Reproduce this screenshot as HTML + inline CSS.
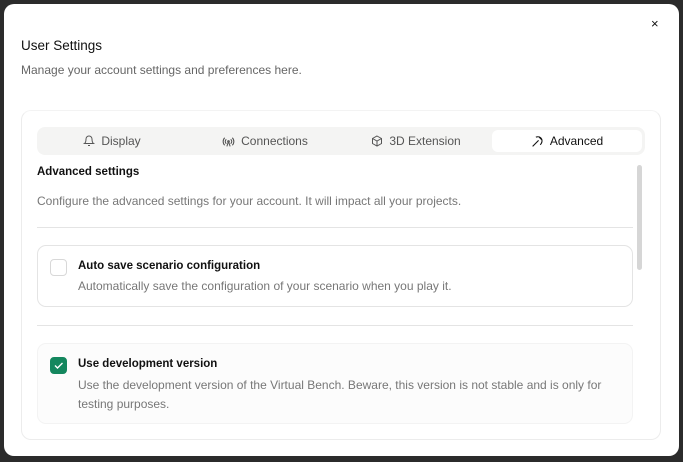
<!DOCTYPE html><html><head><style>
body{margin:0;width:683px;height:462px;background:#2b2b2b;font-family:"Liberation Sans",sans-serif;overflow:hidden;position:relative}
.dlg{position:absolute;left:4px;top:4px;width:675px;height:452px;background:#fff;border-radius:10px}
.a{position:absolute;white-space:nowrap}
.card{position:absolute;left:21px;top:110px;width:638px;height:328px;border:1px solid #ececec;border-radius:10px;border-top-color:#f3f3f3}
.tabs{position:absolute;left:37px;top:127px;width:608px;height:28px;background:#f4f4f3;border-radius:8px}
.tab{position:absolute;top:0;height:28px;line-height:28px;font-size:12px;color:#555;display:flex;align-items:center;justify-content:center;gap:6px}
.act{position:absolute;left:492px;top:130px;width:150px;height:22px;background:#fff;border-radius:6px}
.hr{position:absolute;left:37px;width:596px;height:1px;background:#e4e4e4}
.box{position:absolute;left:37px;width:594px;border:1px solid #e4e4e4;border-radius:9px}
.cb{position:absolute;left:50px;width:15px;height:15px;border:1px solid #d8d8d8;border-radius:4px}
.t{font-size:11.5px;color:#111;font-weight:bold}
.d{font-size:12px;color:#777}
</style></head><body>
<div class="dlg"></div>
<div class="a" style="left:651px;top:16px;font-size:13px;color:#111">×</div>
<div class="a" style="left:21px;top:38px;font-size:13.5px;color:#111">User Settings</div>
<div class="a" style="left:21px;top:63px;font-size:12px;color:#666">Manage your account settings and preferences here.</div>
<div class="card"></div>
<div class="tabs"></div>
<div class="act"></div>
<div class="tab" style="left:37px;width:150px;top:127px"><svg width="12" height="12" viewBox="0 0 24 24" fill="none" stroke="#555" stroke-width="2"><path d="M6 8a6 6 0 0 1 12 0c0 7 3 9 3 9H3s3-2 3-9M10 21h4"/></svg>Display</div>
<div class="tab" style="left:190px;width:150px;top:127px"><svg width="13" height="13" viewBox="0 0 24 24" fill="none" stroke="#555" stroke-width="2"><path d="M5 5a10 10 0 0 0 0 14M19 5a10 10 0 0 1 0 14M8 8a5 5 0 0 0 0 8M16 8a5 5 0 0 1 0 8M12 12l-3 9M12 12l3 9"/><circle cx="12" cy="12" r="1.5"/></svg>Connections</div>
<div class="tab" style="left:341px;width:150px;top:127px"><svg width="12" height="12" viewBox="0 0 24 24" fill="none" stroke="#555" stroke-width="2"><path d="M12 2l9 5v10l-9 5-9-5V7zM3 7l9 5 9-5M12 12v10"/></svg>3D Extension</div>
<div class="tab" style="left:492px;width:150px;top:127px;color:#111"><svg width="13" height="13" viewBox="0 0 24 24" fill="none" stroke="#111" stroke-width="2"><path d="M14 10L3 21M15 4l5 5M9 4c5-2 9 0 11 4M20 8c1 4-1 8-3 10"/></svg>Advanced</div>
<div style="position:absolute;left:637px;top:165px;width:5px;height:105px;background:#d6d6d6;border-radius:3px"></div>
<div class="a" style="left:37px;top:166px;font-size:11.5px;color:#111;font-weight:bold">Advanced settings</div>
<div class="a d" style="left:37px;top:194px">Configure the advanced settings for your account. It will impact all your projects.</div>
<div class="hr" style="top:227px"></div>
<div class="box" style="top:245px;height:60px"></div>
<div class="cb" style="top:259px"></div>
<div class="a t" style="left:78px;top:260px">Auto save scenario configuration</div>
<div class="a d" style="left:78px;top:279px">Automatically save the configuration of your scenario when you play it.</div>
<div class="hr" style="top:325px"></div>
<div class="box" style="top:343px;height:79px;background:#fcfcfc;border-color:#f3f3f3"></div>
<div class="cb" style="top:357px;background:#14875e;border-color:#14875e"><svg width="15" height="15" viewBox="0 0 15 15" style="position:absolute;left:0;top:0"><path d="M4 7.5l2.5 2.5 5-5" stroke="#fff" stroke-width="1.4" fill="none"/></svg></div>
<div class="a t" style="left:78px;top:358px">Use development version</div>
<div class="a d" style="left:78px;top:378px">Use the development version of the Virtual Bench. Beware, this version is not stable and is only for</div>
<div class="a d" style="left:78px;top:397px">testing purposes.</div>
</body></html>
